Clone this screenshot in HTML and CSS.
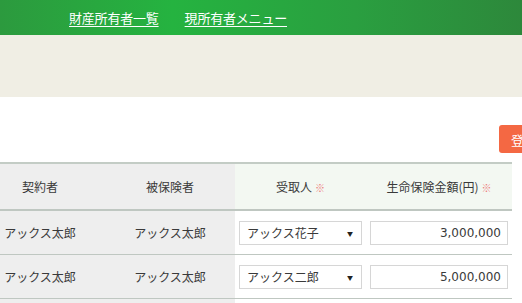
FILE: index.html
```html
<!DOCTYPE html>
<html lang="ja">
<head>
  <meta charset="UTF-8">
  <meta name="viewport" content="width=device-width, initial-scale=1.0">
  <title>生命保険</title>
  <link rel="stylesheet" href="styles.css">
</head>
<body>
  <header class="global-header">
    <nav class="global-nav">
      <a href="#">財産所有者一覧</a>
      <a href="#">現所有者メニュー</a>
    </nav>
  </header>

  <div class="page-band"></div>

  <main class="content">
    <div class="toolbar">
      <button class="btn-register" type="button">登録</button>
    </div>

    <table class="insurance-table">
      <colgroup>
        <col class="col-owner">
        <col class="col-insured">
        <col class="col-receiver">
        <col class="col-amount">
      </colgroup>
      <thead>
        <tr>
          <th class="fixed">契約者</th>
          <th class="fixed">被保険者</th>
          <th class="edit">受取人<span class="req">※</span></th>
          <th class="edit">生命保険金額(円)<span class="req">※</span></th>
        </tr>
      </thead>
      <tbody>
        <tr>
          <td class="fixed">アックス太郎</td>
          <td class="fixed">アックス太郎</td>
          <td>
            <div class="select-wrap">
              <select>
                <option>アックス花子</option>
                <option>アックス二郎</option>
              </select>
            </div>
          </td>
          <td><input class="amount" type="text" value="3,000,000"></td>
        </tr>
        <tr>
          <td class="fixed">アックス太郎</td>
          <td class="fixed">アックス太郎</td>
          <td>
            <div class="select-wrap">
              <select>
                <option>アックス二郎</option>
                <option>アックス花子</option>
              </select>
            </div>
          </td>
          <td><input class="amount" type="text" value="5,000,000"></td>
        </tr>
        <tr class="row-blank">
          <td class="fixed"></td>
          <td class="fixed"></td>
          <td></td>
          <td></td>
        </tr>
      </tbody>
    </table>
  </main>
</body>
</html>
```

FILE: styles.css
```css
body {
  margin: 0;
  background: white;
  color: #333;
  font-family: Verdana, "DejaVu Sans", "Noto Sans CJK JP", sans-serif;
  font-size: 12px;
  overflow: hidden;
}

.global-header {
  height: 35px;
  background: linear-gradient(to right, #2c9a3e 0%, #25b340 33%, #2a9f40 68%, #2d883b 100%);
  display: flex;
  align-items: center;
}

.global-nav {
  display: flex;
  gap: 26px;
  padding-left: 69px;
  padding-bottom: 1px;
}

.global-nav a {
  color: white;
  font-family: "Noto Sans CJK JP", sans-serif;
  font-size: 13px;
  letter-spacing: -0.2px;
  text-decoration: underline;
  text-underline-offset: 3px;
}

.page-band {
  height: 62px;
  background: #f0eee4;
}

.content {
  width: 620px;
}

.toolbar {
  display: flex;
  padding: 28px 0 9px 499px;
}

.btn-register {
  height: 28px;
  padding: 0 12px;
  border: none;
  border-radius: 3px;
  background: #f46843;
  color: white;
  font-family: "Noto Sans CJK JP", sans-serif;
  font-size: 13px;
  white-space: nowrap;
}

.insurance-table {
  margin-left: -25px;
  border-collapse: collapse;
  table-layout: fixed;
  width: 537px;
}

.col-owner { width: 130px; }
.col-insured { width: 130px; }
.col-receiver { width: 131px; }
.col-amount { width: 146px; }

.insurance-table th,
.insurance-table td {
  border-bottom: 1px solid #bfc7c1;
  padding: 0 4px;
  text-align: center;
  font-weight: normal;
  font-family: "Noto Sans CJK JP", sans-serif;
  font-size: 12px;
  color: #3a3a3a;
  white-space: nowrap;
}

.insurance-table thead tr {
  border-top: 2px solid #c3ccc5;
}

.insurance-table th {
  height: 45px;
  border-bottom-width: 2px;
}

.insurance-table td {
  height: 43px;
}

.insurance-table .fixed {
  background: #eeeeee;
}

.insurance-table th.edit {
  background: #f3f8f2;
}

.req {
  color: #ee7b7b;
  font-size: 10px;
  margin-left: 3px;
}

.select-wrap {
  position: relative;
}

.select-wrap::after {
  content: "▼";
  position: absolute;
  right: 9px;
  top: 8px;
  font-size: 6px;
  color: #222;
  pointer-events: none;
}

.select-wrap select {
  appearance: none;
  display: block;
  width: 100%;
  height: 24px;
  padding: 0 7px;
  border: 1px solid #d6d6d6;
  border-radius: 0;
  background: white;
  color: #3a3a3a;
  font-family: "Noto Sans CJK JP", sans-serif;
  font-size: 12px;
}

.amount {
  display: block;
  box-sizing: border-box;
  width: 100%;
  height: 24px;
  padding: 0 6px;
  border: 1px solid #d6d6d6;
  text-align: right;
  color: #3a3a3a;
  font-family: Verdana, "DejaVu Sans", sans-serif;
  font-size: 12px;
}
```
